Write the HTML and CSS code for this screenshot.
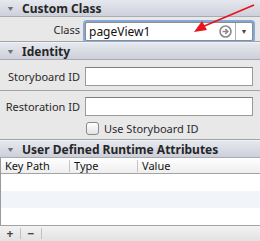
FILE: index.html
```html
<!DOCTYPE html>
<html lang="en">
<head>
  <meta charset="UTF-8">
  <title>Identity Inspector</title>
  <link rel="stylesheet" href="styles.css">
</head>
<body>
  <div class="inspector">
    <div class="section-header header-first"><span class="disclosure">&#9660;</span>Custom Class</div>
    <div class="section-body custom-class">
      <div class="field-row">
        <label class="field-label">Class</label>
        <div class="combo">
          <span class="combo-text">pageView1</span>
          <svg class="go-icon" width="13" height="13" viewBox="0 0 13 13">
            <circle cx="6.5" cy="6.5" r="5.5" fill="none" stroke="#8a8a8a" stroke-width="1.6"/>
            <path d="M3.5 6.5 H8.5 M6.3 4 L8.8 6.5 L6.3 9" fill="none" stroke="#8a8a8a" stroke-width="1.6"/>
          </svg>
          <span class="combo-arrow"><span class="tri">&#9660;</span></span>
        </div>
      </div>
    </div>

    <div class="section-header"><span class="disclosure">&#9660;</span>Identity</div>
    <div class="section-body identity">
      <div class="field-row storyboard-row">
        <label class="field-label">Storyboard ID</label>
        <div class="text-field"></div>
      </div>
      <div class="field-row restoration-row">
        <label class="field-label">Restoration ID</label>
        <div class="text-field"></div>
      </div>
      <div class="check-row">
        <span class="checkbox"></span>
        <span>Use Storyboard ID</span>
      </div>
    </div>

    <div class="section-header"><span class="disclosure">&#9660;</span>User Defined Runtime Attributes</div>
    <div class="table">
      <div class="table-head">
        <div class="col col-key">Key Path</div>
        <div class="col col-type">Type</div>
        <div class="col col-value">Value</div>
      </div>
      <div class="table-row"></div>
      <div class="table-row striped"></div>
      <div class="table-row"></div>
    </div>
    <div class="table-footer">
      <span class="footer-btn">+</span>
      <span class="footer-btn">&minus;</span>
    </div>
  </div>

  <svg class="callout-arrow" width="80" height="40" viewBox="0 0 80 40">
    <line x1="74" y1="5" x2="22" y2="27" stroke="#e8141c" stroke-width="1.6"/>
    <polygon points="14,32 22,21 27,30" fill="#e8141c"/>
  </svg>
</body>
</html>
```

FILE: styles.css
```css
body {
  margin: 0;
  background-color: #e8e8e8;
  font-family: "Noto Sans", sans-serif;
  font-size: 11px;
  color: #1e1e1e;
}

.inspector {
  width: 260px;
  height: 241px;
  display: flex;
  flex-direction: column;
  overflow: hidden;
}

.section-header {
  height: 16px;
  display: flex;
  align-items: center;
  background: linear-gradient(#e6e8ef, #cdd0da);
  border-top: 1px solid #f2f3f7;
  border-bottom: 1px solid #a9abb3;
  font-weight: bold;
  font-size: 12px;
  color: #262626;
  flex-shrink: 0;
}

.header-first {
  border-top: none;
  height: 16px;
}

.disclosure {
  font-size: 9px;
  color: #707070;
  width: 22px;
  padding-left: 6px;
  box-sizing: border-box;
  transform: scaleY(0.8);
}

.section-body {
  border-bottom: 1px solid #a3a3a3;
}

.custom-class {
  height: 27px;
  display: flex;
  align-items: center;
}

.field-row {
  display: flex;
  align-items: center;
  width: 100%;
}

.field-label {
  width: 80px;
  text-align: right;
  padding-right: 5px;
  color: #2a2a2a;
  flex-shrink: 0;
}

.combo {
  width: 166px;
  height: 17px;
  display: flex;
  align-items: center;
  background-color: #fff;
  border: 1px solid #8c8c8c;
  box-shadow: 0 0 0 2px #84a9d9;
  border-radius: 2px;
  margin-top: 5px;
}

.combo-text {
  flex: 1;
  padding-left: 3px;
  font-size: 12px;
  color: #111;
}

.go-icon {
  margin-right: 3px;
}

.combo-arrow {
  width: 16px;
  height: 17px;
  border-left: 1px solid #b0b0b0;
  display: flex;
  align-items: center;
  justify-content: center;
}

.tri {
  font-size: 7px;
  color: #444;
}

.identity {
  display: flex;
  flex-direction: column;
}

.storyboard-row {
  height: 31px;
  padding-top: 3px;
  box-sizing: border-box;
  border-bottom: 1px solid #a3a3a3;
}

.restoration-row {
  height: 25px;
  padding-top: 3px;
}

.text-field {
  width: 166px;
  height: 17px;
  background-color: #fff;
  border: 1px solid #9a9a9a;
  border-top-color: #7e7e7e;
}

.check-row {
  display: flex;
  align-items: center;
  gap: 5px;
  padding-left: 86px;
  height: 18px;
  padding-bottom: 2px;
  color: #2a2a2a;
}

.checkbox {
  width: 11px;
  height: 11px;
  border: 1px solid #8a8a8a;
  border-radius: 3px;
  background: linear-gradient(#ffffff, #e4e4e4);
}

.table {
  flex: 1;
  display: flex;
  flex-direction: column;
  background-color: #fff;
  border-left: 1px solid #9a9a9a;
}

.table-head {
  height: 15px;
  display: flex;
  align-items: center;
  background: linear-gradient(#ffffff, #eeeeee);
  border-bottom: 1px solid #a3a3a3;
  color: #141414;
}

.col {
  padding-left: 4px;
  box-sizing: border-box;
}

.col-key {
  width: 68px;
}

.col-type,
.col-value {
  border-left: 1px solid #c4c4c4;
  height: 12px;
  line-height: 12px;
}

.col-type {
  width: 68px;
}

.table-row {
  height: 17px;
}

.striped {
  background-color: #f1f4f8;
}

.table-footer {
  height: 15px;
  display: flex;
  align-items: center;
  background: linear-gradient(#f2f2f2, #e2e2e2);
  border-top: 1px solid #a3a3a3;
  flex-shrink: 0;
}

.footer-btn {
  width: 20px;
  text-align: center;
  border-right: 1px solid #c0c0c0;
  font-weight: bold;
  font-size: 12px;
  line-height: 11px;
  color: #444;
}

.callout-arrow {
  position: absolute;
  left: 180px;
  top: 0;
}
```
